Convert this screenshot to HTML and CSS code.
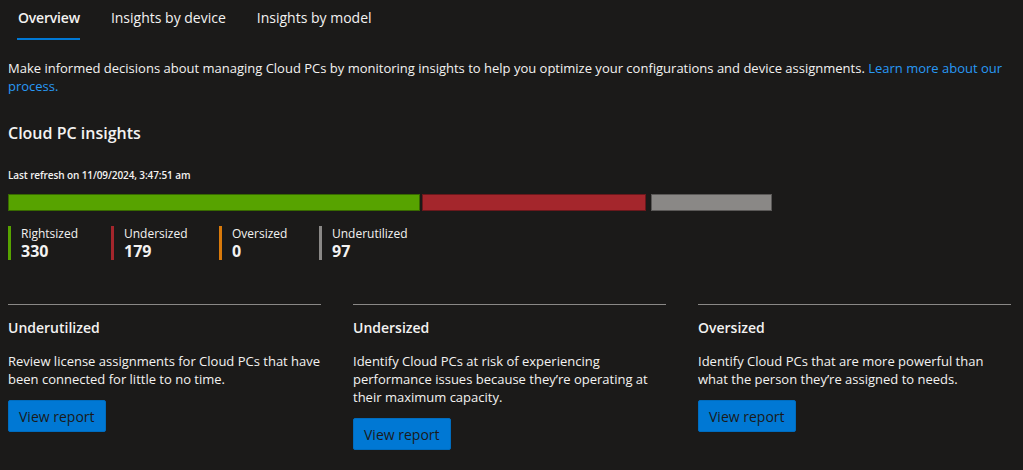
FILE: index.html
```html
<!DOCTYPE html>
<html lang="en">
<head>
<meta charset="utf-8">
<title>Cloud PC insights</title>
<link rel="stylesheet" href="styles.css">
</head>
<body>
<nav class="tabs">
  <a class="tab active">Overview</a>
  <a class="tab">Insights by device</a>
  <a class="tab">Insights by model</a>
</nav>
<main class="content">
  <p class="intro">Make informed decisions about managing Cloud PCs by monitoring insights to help you optimize your configurations and device assignments. <a class="link">Learn more about our process.</a></p>
  <h2 class="section-title">Cloud PC insights</h2>
  <div class="refresh">Last refresh on 11/09/2024, 3:47:51 am</div>
  <div class="bar">
    <div class="seg seg-green" style="width:412px"></div>
    <div class="seg seg-red" style="width:224px"></div>
    <div class="seg seg-gray" style="width:121px"></div>
  </div>
  <div class="legend">
    <div class="legend-item li-green"><span class="legend-label">Rightsized</span><span class="legend-value">330</span></div>
    <div class="legend-item li-red"><span class="legend-label">Undersized</span><span class="legend-value">179</span></div>
    <div class="legend-item li-orange"><span class="legend-label">Oversized</span><span class="legend-value">0</span></div>
    <div class="legend-item li-gray"><span class="legend-label">Underutilized</span><span class="legend-value">97</span></div>
  </div>
  <div class="cards">
    <section class="card">
      <h3 class="card-title">Underutilized</h3>
      <p class="card-text">Review license assignments for Cloud PCs that have been connected for little to no time.</p>
      <button class="btn">View report</button>
    </section>
    <section class="card">
      <h3 class="card-title">Undersized</h3>
      <p class="card-text">Identify Cloud PCs at risk of experiencing performance issues because they’re operating at their maximum capacity.</p>
      <button class="btn">View report</button>
    </section>
    <section class="card">
      <h3 class="card-title">Oversized</h3>
      <p class="card-text">Identify Cloud PCs that are more powerful than what the person they’re assigned to needs.</p>
      <button class="btn">View report</button>
    </section>
  </div>
</main>
</body>
</html>
```
FILE: styles.css
```css
* { box-sizing: border-box; }
html, body { margin: 0; padding: 0; }
body {
  background: #1b1a19;
  color: #f3f2f1;
  font-family: "Open Sans", "Noto Sans", sans-serif;
  width: 1023px;
  height: 470px;
  overflow: hidden;
}
.tabs {
  display: flex;
  gap: 31px;
  padding-left: 18px;
  height: 40px;
}
.tab {
  font-size: 14px;
  line-height: 20px;
  padding-top: 8px;
  color: #f3f2f1;
  border-bottom: 2px solid transparent;
  height: 40px;
}
.tab.active {
  font-weight: 600;
  border-bottom-color: #0078d4;
  margin-left: -1px;
  padding-left: 1px;
  letter-spacing: -0.2px;
}
.content { padding: 0 8px; }
.intro {
  margin: 19px 0 0;
  font-size: 13px;
  line-height: 18px;
  width: 1007px;
}
.link { color: #2899f5; }
.section-title {
  margin: 27px 0 0;
  font-size: 16px;
  font-weight: 600;
  line-height: 22px;
}
.refresh {
  margin-top: 24px;
  font-size: 10px;
  font-weight: 600;
  line-height: 14px;
  letter-spacing: -0.1px;
}
.bar {
  margin-top: 12px;
  display: flex;
  height: 17px;
}
.seg { height: 17px; border: 1px solid rgba(0,0,0,0.35); }
.seg-green { background: #57a300; }
.seg-red { background: #a4262c; margin-left: 2px; }
.seg-gray { background: #8a8886; margin-left: 5px; }
.legend {
  margin-top: 15px;
  display: flex;
  height: 34px;
}
.legend-item {
  display: flex;
  flex-direction: column;
  border-left: 3px solid;
  padding-left: 10px;
}
.li-green { border-color: #57a300; width: 103px; }
.li-red { border-color: #a4262c; width: 108px; }
.li-orange { border-color: #d97a0b; width: 100px; }
.li-gray { border-color: #8a8886; }
.legend-label { font-size: 12px; line-height: 16px; }
.legend-value { font-size: 16px; font-weight: 700; line-height: 18px; }
.cards {
  margin-top: 44px;
  display: grid;
  grid-template-columns: repeat(3, 313px);
  column-gap: 32px;
}
.card { border-top: 1px solid #8a8886; }
.card-title {
  margin: 13px 0 0;
  font-size: 14px;
  font-weight: 600;
  line-height: 20px;
}
.card-text {
  margin: 14px 0 0;
  font-size: 13px;
  line-height: 18px;
}
.btn {
  margin-top: 12px;
  display: block;
  height: 32px;
  padding: 0 10px;
  background: #0078d4;
  border: 1px solid #006cbe;
  border-radius: 2px;
  color: #1b1a19;
  font-family: inherit;
  font-size: 14px;
}
```
